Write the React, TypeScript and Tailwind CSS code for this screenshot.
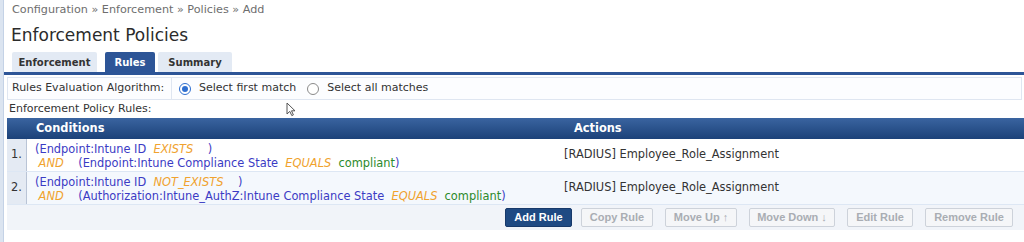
import { useState } from 'react';

type Clause = { attr: string; op: string; value?: string };

type Rule = {
  first: Clause;
  second: Clause;
  action: string;
};

const rules: Rule[] = [
  {
    first: { attr: 'Endpoint:Intune ID', op: 'EXISTS' },
    second: { attr: 'Endpoint:Intune Compliance State', op: 'EQUALS', value: 'compliant' },
    action: '[RADIUS] Employee_Role_Assignment',
  },
  {
    first: { attr: 'Endpoint:Intune ID', op: 'NOT_EXISTS' },
    second: {
      attr: 'Authorization:Intune_AuthZ:Intune Compliance State',
      op: 'EQUALS',
      value: 'compliant',
    },
    action: '[RADIUS] Employee_Role_Assignment',
  },
];

const tabs = [
  { label: 'Enforcement', cls: 'w-[85px]' },
  { label: 'Rules', cls: 'w-[50px] ml-[8px]' },
  { label: 'Summary', cls: 'w-[74px] ml-[3px]' },
];

const buttons = [
  { label: 'Copy Rule', width: 'w-[72px]' },
  { label: 'Move Up ↑', width: 'w-[72px]' },
  { label: 'Move Down ↓', width: 'w-[86px]' },
  { label: 'Edit Rule', width: 'w-[66px]' },
  { label: 'Remove Rule', width: 'w-[88px]' },
];

const ClauseText = ({ clause }: { clause: Clause }) => (
  <span className="whitespace-pre">
    <span className="text-[#3b3bc4]">({clause.attr}</span>
    <span className="text-[#f0a22e] italic">{'  ' + clause.op + '  '}</span>
    {clause.value ? (
      <>
        <span className="text-[#2c8a2c]">{clause.value}</span>
        <span className="text-[#3b3bc4]">)</span>
      </>
    ) : (
      <span className="text-[#3b3bc4]">{'  )'}</span>
    )}
  </span>
);

const Radio = ({ checked }: { checked: boolean }) => (
  <span
    className={
      checked
        ? 'shrink-0 w-[12px] h-[12px] rounded-full border border-[#2f6fd0] flex items-center justify-center bg-white'
        : 'shrink-0 w-[12px] h-[12px] rounded-full border border-[#8a8a8a] flex bg-white'
    }
  >
    {checked && <span className="w-[6px] h-[6px] rounded-full bg-[#2f6fd0]" />}
  </span>
);

export default function App() {
  const [activeTab] = useState('Rules');
  const [firstMatch] = useState(true);

  return (
    <div className="w-[1024px] h-[242px] bg-white overflow-hidden flex font-['DejaVu_Sans',sans-serif] text-[#333] relative">
      <div className="w-[4px] bg-[#dbe4f0] border-r border-[#c4d2e6]" />
      <div className="flex-1 flex flex-col">
        <div className="pl-[8px] pt-[1px] h-[17px] text-[11.2px] text-[#6e6e6e] leading-[17px]">
          Configuration » Enforcement » Policies » Add
        </div>
        <div className="pl-[7px] pt-[1px] h-[34px] text-[17px] leading-[34px] text-[#2b2b2b]">
          Enforcement Policies
        </div>

        <div className="flex items-end pl-[8px] h-[21px] border-b-[3px] border-[#2d5597] box-content">
          {tabs.map((tab) => (
            <div
              key={tab.label}
              className={
                tab.label === activeTab
                  ? `${tab.cls} h-[20px] flex items-center justify-center rounded-t-[2px] bg-[#2d5597] text-white text-[10px] font-bold`
                  : `${tab.cls} h-[20px] flex items-center justify-center rounded-t-[2px] bg-[#e3eaf4] text-[#333] text-[10px] font-bold`
              }
            >
              {tab.label}
            </div>
          ))}
        </div>

        <div className="mt-[2px] ml-[3px] mr-[2px] h-[23px] flex border border-[#dfe6f1] bg-[#fcfdff] text-[11px]">
          <div className="w-[164px] pl-[4px] flex items-center border-r border-[#dfe6f1]">
            Rules Evaluation Algorithm:
          </div>
          <div className="flex items-center pl-[7px] gap-[8px]">
            <Radio checked={firstMatch} />
            <span>Select first match</span>
            <span className="ml-[3px] flex">
              <Radio checked={!firstMatch} />
            </span>
            <span>Select all matches</span>
          </div>
        </div>

        <div className="pl-[5px] h-[17px] flex items-center text-[11px] mt-[1px]">
          Enforcement Policy Rules:
        </div>

        <div className="ml-[3px] flex flex-col text-[11.4px]">
          <div className="h-[21px] flex items-center text-white font-bold bg-gradient-to-b from-[#3a64a0] to-[#1c4279]">
            <div className="w-[555px] pl-[29px]">Conditions</div>
            <div className="pl-[12px]">Actions</div>
          </div>
          {rules.map((rule, i) => (
            <div
              key={i}
              className={
                i === 0
                  ? 'h-[33px] flex border-b border-[#dde7f4] bg-white'
                  : 'h-[33px] flex border-b border-[#dde7f4] bg-[#f4f8fd]'
              }
            >
              <div className="w-[20px] flex items-center justify-center bg-[#e4eaf3] border-r border-[#b9c4d6] text-[#333]">
                {i + 1}.
              </div>
              <div className="w-[535px] pl-[8px] pt-[1px] flex flex-col justify-center leading-[14px]">
                <div>
                  <ClauseText clause={rule.first} />
                </div>
                <div className="whitespace-pre">
                  <span className="text-[#f0a22e] italic">{' AND    '}</span>
                  <ClauseText clause={rule.second} />
                </div>
              </div>
              <div className="flex items-center pl-[2px] text-[#333]">{rule.action}</div>
            </div>
          ))}
          <div className="h-[25px] bg-[#f1f4f9] flex items-center justify-end pr-[11px] gap-[12px] font-['Liberation_Sans',Arial,sans-serif] text-[11px] font-bold">
            <button className="w-[67px] h-[19px] mr-[-3px] rounded-[2px] bg-[#1f4a83] border border-[#17396a] text-white">
              Add Rule
            </button>
            {buttons.map((b) => (
              <button
                key={b.label}
                disabled
                className={`${b.width} h-[19px] rounded-[2px] bg-[#f5f6f8] border border-[#cdd2da] text-[#a9adb3]`}
              >
                {b.label}
              </button>
            ))}
          </div>
        </div>
      </div>

      <svg
        className="absolute left-[286px] top-[102px]"
        width="10"
        height="15"
        viewBox="0 0 10 15"
      >
        <path d="M1 1 L1 12 L3.8 9.4 L5.8 13.6 L7.4 12.9 L5.5 8.8 L9 8.8 Z" fill="white" stroke="#555" strokeWidth="1" />
      </svg>
    </div>
  );
}
